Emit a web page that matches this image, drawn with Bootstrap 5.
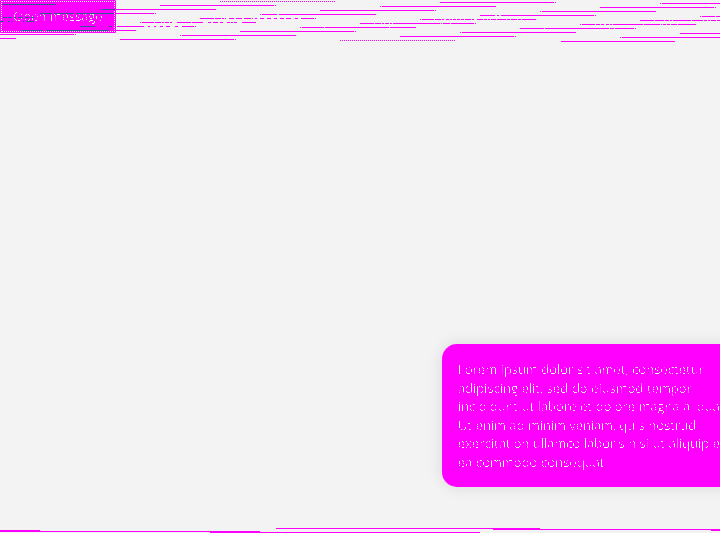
<!DOCTYPE html>
<html lang="en"><head><meta charset="utf-8"><title>Message</title>
<link href="https://cdn.jsdelivr.net/npm/bootstrap@5.3.0/dist/css/bootstrap.min.css" rel="stylesheet">
<style>
body{background:#f3f3f3;font-family:"Open Sans",sans-serif;font-weight:300;width:720px;height:533px}
.open-btn{width:116px;height:33px;background:#f0f;color:#fff;font-size:13px;font-weight:300;letter-spacing:.17px;outline:1px dotted #fff;outline-offset:-2px;border:1px solid #f0f;border-top-color:#2f5b94;border-radius:1px}
.open-btn:hover{background:#f0f;color:#fff}
.message{width:312px;height:143px;margin-left:442px;margin-bottom:46px;background:#f0f;color:#fff;border-radius:15px;padding:16px;font-size:13px;line-height:18.57px;letter-spacing:.23px;box-shadow:0 0 16px #0000001c;white-space:nowrap}
.crisp-text{filter:url(#crisp)}
.streaks{left:0;top:0;pointer-events:none}
</style>
<script src="https://cdn.jsdelivr.net/npm/bootstrap@5.3.0/dist/js/bootstrap.bundle.min.js"></script></head>
<body class="position-relative overflow-hidden d-flex flex-column justify-content-between align-items-start">
<button class="btn open-btn p-0"><span class="crisp-text d-block">Open message</span></button>
<div class="message"><div class="crisp-text">Lorem ipsum dolor sit amet, consectetur<br>adipiscing elit, sed do eiusmod tempor<br>incididunt ut labore et dolore magna aliqua.<br>Ut enim ad minim veniam, quis nostrud<br>exercitation ullamco laboris nisi ut aliquip ex<br>ea commodo consequat.</div></div>
<svg class="streaks position-absolute" width="720" height="533" shape-rendering="crispEdges" fill="none" stroke="#f0f">
<filter id="crisp" color-interpolation-filters="sRGB"><feComponentTransfer><feFuncA type="linear" slope="20" intercept="-11.6"/></feComponentTransfer></filter>
<path stroke-dasharray="1 1" d="M220 1.5H336M340 40.5H456"/>
<path d="M440 2.5H554M555 2.5h1M660 3.5h1M662 3.5H720M160 5.5H274M275 5.5h1M380 6.5h1M382 6.5H496M600 7.5H714M715 7.5h1M116 9.5H216M320 10.5H434M435 10.5h1M540 11.5h1M542 11.5H656M116 13.5H154M155 13.5h1M260 14.5h1M262 14.5H277M279 14.5H376M480 15.5H495M497 15.5h2M501 15.5H594M595 15.5h1M700 16.5h1M702 16.5h13M716 16.5h4"/>
<path d="M200 18.5h14M215 18.5h6M222 18.5h2M225 18.5h1M229 18.5h5M236 18.5h6M244 18.5h7M252 18.5h1M255 18.5h2M260 18.5h4M267 18.5h4M274 18.5h3M280 18.5h4M286 18.5h5M295 18.5h3M301 18.5h13M315 18.5h1M420 19.5h1M422 19.5h12M435 19.5h6M442 19.5h2M446 19.5h3M450 19.5h2M453 19.5h3M457 19.5h3M461 19.5h3M465 19.5h6M472 19.5h2M477 19.5h6M484 19.5h3M488 19.5h2M491 19.5h5M497 19.5h9M507 19.5h3M511 19.5h6M518 19.5h2M520 19.5h1M522 19.5h14M640 20.5h14M655 20.5h9M665 20.5h4M670 20.5h2M673 20.5h18M692 20.5h11M704 20.5h3M708 20.5h2M711 20.5h5M717 20.5h3"/>
<path d="M140 22.5h1M142 22.5h12M155 22.5h6M162 22.5h2M165 22.5h4M170 22.5h2M177 22.5h14M192 22.5h11M208 22.5h3M213 22.5h5M220 22.5h3M227 22.5h3M231 22.5h2M234 22.5h3M242 22.5h14M360 23.5h14M375 23.5h6M382 23.5h2M385 23.5h4M390 23.5h2M393 23.5h47M441 23.5h1M443 23.5h7M451 23.5h23M475 23.5h1M580 24.5h1M582 24.5h13M596 24.5h4M601 24.5h3M606 24.5h3M610 24.5h2M613 24.5h30M644 24.5h16M661 24.5h1M663 24.5h3M667 24.5h3M671 24.5h6M678 24.5h18"/>
<path d="M117 26.5H144M148 26.5h2M154 26.5h2M160 26.5h3M166 26.5h4M175 26.5h3M182 26.5h12M195 26.5h1M300 27.5h1M302 27.5H324M325 27.5H389M390 27.5H416M520 28.5H544M545 28.5H609M610 28.5h4M615 28.5H634M635 28.5h1M116 30.5H136M240 31.5H354M355 31.5h1M460 32.5h1M462 32.5H576M680 33.5H720M0 34.5H74M75 34.5h1M180 35.5h1M182 35.5H296M400 36.5H514M515 36.5h1M620 37.5h1M622 37.5H720M0 38.5H16M120 39.5H234M235 39.5h1M561 41.5H675"/>
<path d="M276 528.5H540M493 529.5H720M0 530.5H40M711 530.5h9M0 531.5H260M210 532.5H480"/>
<path stroke="#2f5b94" d="M2 4.5H56M100 9.5h1M102 9.5H115M40 13.5H52M54 13.5H74M76 13.5H114M3 17.5h4M8 17.5h4M14 17.5h2M18 17.5h5M25 17.5h4M31 17.5h3M0 21.5h4M8 21.5h2M12 21.5h1M23 21.5h1M26 21.5h8M80 26.5H95M102 26.5h1M109 26.5h3M20 30.5h1M22 30.5H43M46 30.5H109"/>
</svg></body></html>
